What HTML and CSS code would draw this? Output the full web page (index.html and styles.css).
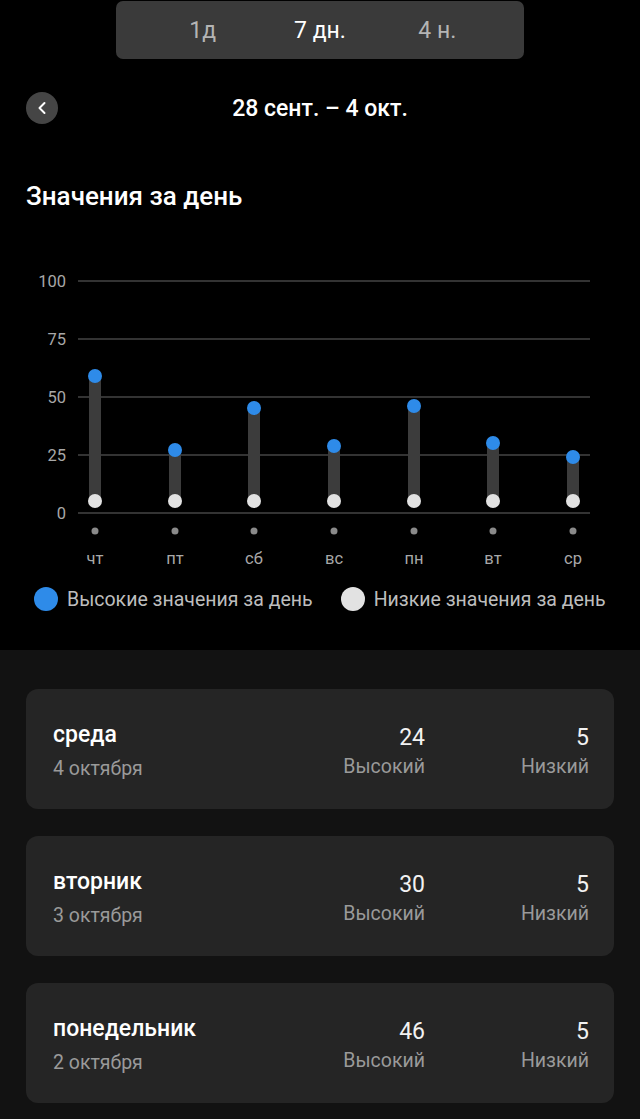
FILE: index.html
```html
<!DOCTYPE html>
<html lang="ru">
<head>
<meta charset="utf-8">
<link rel="stylesheet" href="styles.css">
</head>
<body>
<div class="top">
  <div class="seg">
    <div class="seg-item">1д</div>
    <div class="seg-item active">7 дн.</div>
    <div class="seg-item">4 н.</div>
  </div>
  <div class="header">
    <div class="back"><svg width="32" height="32" viewBox="0 0 32 32"><path d="M18.5 11 L13.5 16 L18.5 21" fill="none" stroke="#fff" stroke-width="2" stroke-linecap="round" stroke-linejoin="round"/></svg></div>
    <div class="range">28 сент. – 4 окт.</div>
    <div></div>
  </div>
  <h2 class="section-title">Значения за день</h2>
  <svg class="chart" width="640" height="316" viewBox="0 0 640 316">
    <g class="grid" stroke="#444" stroke-width="1.5">
      <line x1="78" y1="21" x2="590" y2="21"/>
      <line x1="78" y1="79" x2="590" y2="79"/>
      <line x1="78" y1="137" x2="590" y2="137"/>
      <line x1="78" y1="195" x2="590" y2="195"/>
      <line x1="78" y1="253" x2="590" y2="253"/>
    </g>
    <g class="ylab" fill="#a8a8a8" font-size="16.5" text-anchor="end" font-family="Roboto, sans-serif">
      <text x="66" y="27">100</text>
      <text x="66" y="85">75</text>
      <text x="66" y="143">50</text>
      <text x="66" y="201">25</text>
      <text x="66" y="259">0</text>
    </g>
    <g fill="#3c3c3c">
      <rect x="89" y="116" width="12" height="125"/>
      <rect x="169" y="190" width="12" height="51"/>
      <rect x="248" y="148" width="12" height="93"/>
      <rect x="328" y="186" width="12" height="55"/>
      <rect x="408" y="146" width="12" height="95"/>
      <rect x="487" y="183" width="12" height="58"/>
      <rect x="567" y="197" width="12" height="44"/>
    </g>
    <g fill="#2e8be9">
      <circle cx="95" cy="116" r="7"/>
      <circle cx="175" cy="190" r="7"/>
      <circle cx="254" cy="148" r="7"/>
      <circle cx="334" cy="186" r="7"/>
      <circle cx="414" cy="146" r="7"/>
      <circle cx="493" cy="183" r="7"/>
      <circle cx="573" cy="197" r="7"/>
    </g>
    <g fill="#e2e2e2">
      <circle cx="95" cy="241" r="7"/>
      <circle cx="175" cy="241" r="7"/>
      <circle cx="254" cy="241" r="7"/>
      <circle cx="334" cy="241" r="7"/>
      <circle cx="414" cy="241" r="7"/>
      <circle cx="493" cy="241" r="7"/>
      <circle cx="573" cy="241" r="7"/>
    </g>
    <g fill="#8a8a8a">
      <circle cx="95" cy="271" r="3.5"/>
      <circle cx="175" cy="271" r="3.5"/>
      <circle cx="254" cy="271" r="3.5"/>
      <circle cx="334" cy="271" r="3.5"/>
      <circle cx="414" cy="271" r="3.5"/>
      <circle cx="493" cy="271" r="3.5"/>
      <circle cx="573" cy="271" r="3.5"/>
    </g>
    <g fill="#a8a8a8" font-size="16.5" text-anchor="middle" font-family="Roboto, sans-serif">
      <text x="95" y="304">чт</text>
      <text x="175" y="304">пт</text>
      <text x="254" y="304">сб</text>
      <text x="334" y="304">вс</text>
      <text x="414" y="304">пн</text>
      <text x="493" y="304">вт</text>
      <text x="573" y="304">ср</text>
    </g>
  </svg>
  <div class="legend">
    <div class="legend-item"><span class="dot dot-high"></span>Высокие значения за день</div>
    <div class="legend-item"><span class="dot dot-low"></span>Низкие значения за день</div>
  </div>
</div>
<div class="list">
  <div class="card">
    <div class="day">
      <div class="day-name">среда</div>
      <div class="day-date">4 октября</div>
    </div>
    <div class="stat"><div class="stat-val">24</div><div class="stat-lab">Высокий</div></div>
    <div class="stat"><div class="stat-val">5</div><div class="stat-lab">Низкий</div></div>
  </div>
  <div class="card">
    <div class="day">
      <div class="day-name">вторник</div>
      <div class="day-date">3 октября</div>
    </div>
    <div class="stat"><div class="stat-val">30</div><div class="stat-lab">Высокий</div></div>
    <div class="stat"><div class="stat-val">5</div><div class="stat-lab">Низкий</div></div>
  </div>
  <div class="card">
    <div class="day">
      <div class="day-name">понедельник</div>
      <div class="day-date">2 октября</div>
    </div>
    <div class="stat"><div class="stat-val">46</div><div class="stat-lab">Высокий</div></div>
    <div class="stat"><div class="stat-val">5</div><div class="stat-lab">Низкий</div></div>
  </div>
</div>
</body>
</html>
```

FILE: styles.css
```css
* { box-sizing: border-box; }
html, body { margin: 0; padding: 0; background: #000; }
body {
  font-family: Roboto, "Noto Sans", sans-serif;
  color: #fff;
  width: 640px;
  min-height: 1119px;
  display: flex;
  flex-direction: column;
}
.top {
  padding-top: 1px;
  padding-bottom: 39px;
}
.seg {
  width: 408px;
  height: 58px;
  margin: 0 auto;
  background: #3a3a3a;
  border-radius: 7px;
  display: flex;
  align-items: center;
  padding: 0 28px;
}
.seg-item {
  flex: 1;
  text-align: center;
  font-size: 23px;
  color: #b4b4b4;
}
.seg-item.active { color: #fff; }
.header {
  margin-top: 33px;
  height: 32px;
  display: grid;
  grid-template-columns: 1fr auto 1fr;
  align-items: center;
  padding: 0 26px;
}
.back {
  width: 32px;
  height: 32px;
  border-radius: 50%;
  background: #454545;
}
.back svg { display: block; }
.range {
  font-size: 23px;
  font-weight: 500;
  color: #fff;
}
.section-title {
  margin: 58px 0 0 26px;
  font-size: 26px;
  line-height: 28px;
  font-weight: 500;
  color: #fff;
}
.chart {
  display: block;
  margin-top: 50px;
}
.legend {
  margin-top: 11px;
  height: 24px;
  display: flex;
  align-items: center;
  padding-left: 34px;
  gap: 28px;
}
.legend-item {
  display: flex;
  align-items: center;
  gap: 9px;
  font-size: 19.5px;
  color: #bdbdbd;
}
.dot {
  width: 24px;
  height: 24px;
  border-radius: 50%;
  display: block;
}
.dot-high { background: #2e8be9; }
.dot-low { background: #e2e2e2; }
.list {
  flex: 1;
  background: #121212;
  padding: 39px 26px 18px;
  display: flex;
  flex-direction: column;
  gap: 27px;
}
.card {
  height: 120px;
  background: #252525;
  border-radius: 12px;
  display: flex;
  padding: 32px 25px 0 27px;
  gap: 24px;
}
.day { flex: 1; }
.day-name {
  font-size: 23px;
  line-height: 28px;
  font-weight: 500;
  color: #fff;
}
.day-date {
  margin-top: 6px;
  font-size: 19.5px;
  line-height: 28px;
  color: #9a9a9a;
}
.stat {
  width: 140px;
  text-align: right;
  padding-top: 3px;
}
.stat-val {
  font-size: 23px;
  line-height: 28px;
  color: #f2f2f2;
}
.stat-lab {
  margin-top: 1px;
  font-size: 19.5px;
  line-height: 28px;
  color: #9a9a9a;
}
```
